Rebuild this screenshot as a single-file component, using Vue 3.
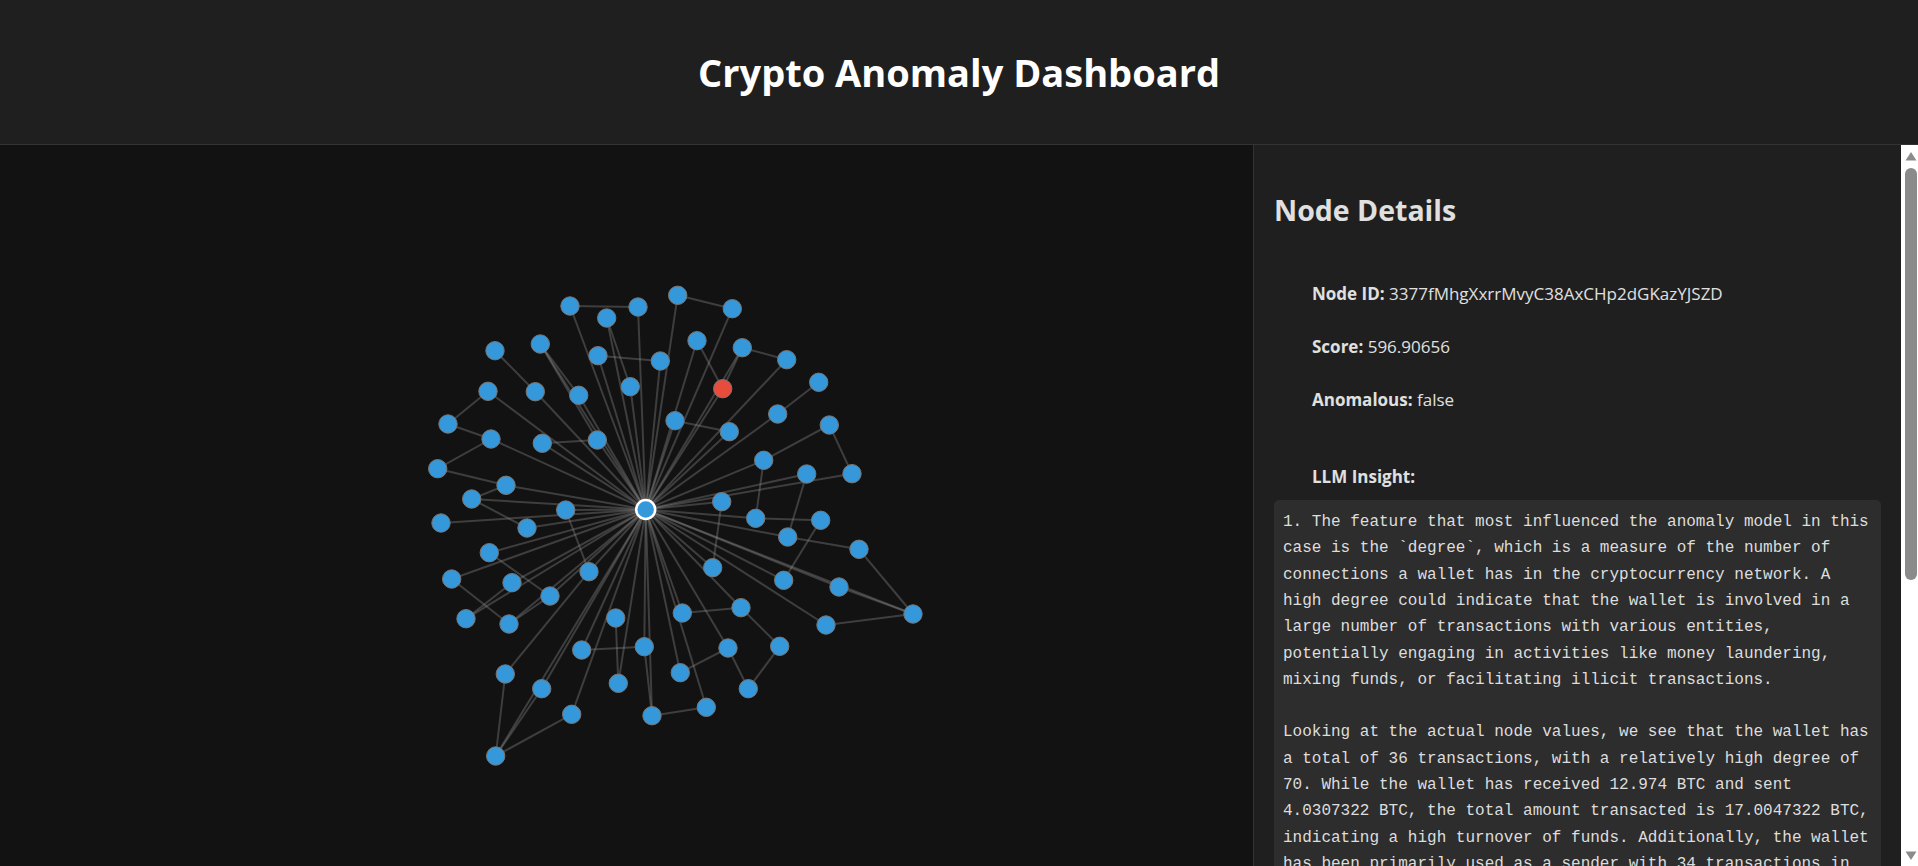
<template>
  <div class="dashboard">
    <header class="top-bar">
      <h1>Crypto Anomaly Dashboard</h1>
    </header>
    <div class="content">
      <main class="graph-area">
        <svg class="graph" viewBox="0 145 1253 721">
          <line
            v-for="(edge, i) in edges"
            :key="i"
            class="edge"
            :x1="nodes[edge[0]][0]"
            :y1="nodes[edge[0]][1]"
            :x2="nodes[edge[1]][0]"
            :y2="nodes[edge[1]][1]"
          />
          <circle
            v-for="(node, i) in nodes"
            :key="'n' + i"
            class="node"
            :class="{ anomalous: i === redNode }"
            :cx="node[0]"
            :cy="node[1]"
            r="9.2"
          />
          <circle class="node selected" :cx="hub[0]" :cy="hub[1]" r="9.5" />
        </svg>
      </main>
      <aside class="details">
        <h2>Node Details</h2>
        <div class="fields">
          <p><strong>Node ID:</strong> 3377fMhgXxrrMvyC38AxCHp2dGKazYJSZD</p>
          <p><strong>Score:</strong> 596.90656</p>
          <p><strong>Anomalous:</strong> false</p>
          <p class="insight-label"><strong>LLM Insight:</strong></p>
        </div>
        <pre class="insight">{{ insight }}</pre>
      </aside>
      <div class="scrollbar">
        <svg class="arrow up" width="12" height="10" viewBox="0 0 12 10"><path d="M6 1 L11.5 9.5 H0.5 Z" /></svg>
        <div class="thumb"></div>
        <svg class="arrow down" width="12" height="10" viewBox="0 0 12 10"><path d="M0.5 0.5 H11.5 L6 9 Z" /></svg>
      </div>
    </div>
  </div>
</template>

<script setup>
const hub = [645.7, 509.5]
const redNode = 16

const nodes = [
  [570, 306], [606.7, 318], [638, 307], [677.7, 295.3], [732.3, 308.7],
  [697, 340.7], [598, 355.7], [660.3, 361], [540.3, 344], [495, 350.7],
  [630.3, 386.7], [742.3, 347.7], [786.7, 359.7], [488, 391.3], [535.3, 391.7],
  [578.7, 395.3], [722.7, 388.7], [818.7, 382.3], [675, 420.7], [729.3, 431.7],
  [777.7, 414], [829.3, 425], [448, 424], [491, 439], [542.3, 443.3],
  [597.3, 440], [763.7, 460.3], [806.7, 474], [852, 473.7], [437.7, 468.7],
  [506, 485.3], [471.7, 499], [565.7, 510], [721.7, 501.7], [755.7, 518.3],
  [820.7, 520.3], [441, 523], [527, 528], [787.7, 537], [859, 549.3],
  [489.3, 552.7], [712.7, 567.7], [589, 571.7], [451.7, 579], [512, 582.7],
  [783.7, 580.3], [839, 587], [550, 596], [741, 607.7], [913, 614],
  [682.3, 613], [466, 618.7], [509, 624], [615.7, 618], [826, 625],
  [581.7, 650], [644.3, 646.7], [779.7, 646.3], [728, 648], [680.3, 672.7],
  [505.3, 674], [618.3, 683.3], [541.7, 688.7], [748.3, 688.7], [706.3, 707.3],
  [571.7, 714.3], [652, 715.7], [495.7, 756],
  hub,
]

const hubIndex = nodes.length - 1
const notOnHub = [9, 17, 21, 22, 29, 35, 39, 53, 57, 60, 63]

const links = [
  [0, 2], [3, 4], [5, 16], [6, 7], [8, 15], [8, 25], [9, 14], [13, 22], [22, 23],
  [29, 23], [29, 30], [24, 25], [31, 30], [31, 37], [32, 42], [1, 10], [18, 19],
  [16, 11], [11, 12], [17, 20], [21, 26], [21, 28], [27, 38], [26, 34], [33, 41],
  [34, 35], [38, 39], [35, 45], [39, 49], [46, 49], [54, 49], [48, 57], [57, 63],
  [63, 58], [50, 48], [59, 58], [40, 47], [43, 52], [51, 44], [52, 47], [60, 42],
  [60, 67], [67, 62], [67, 65], [55, 56], [56, 66], [66, 64], [53, 61],
]

const edges = [
  ...nodes.slice(0, hubIndex).map((_, i) => i).filter((i) => !notOnHub.includes(i)).map((i) => [i, hubIndex]),
  ...links,
]

const insight = `1. The feature that most influenced the anomaly model in this case is the \`degree\`, which is a measure of the number of connections a wallet has in the cryptocurrency network. A high degree could indicate that the wallet is involved in a large number of transactions with various entities, potentially engaging in activities like money laundering, mixing funds, or facilitating illicit transactions.

Looking at the actual node values, we see that the wallet has a total of 36 transactions, with a relatively high degree of 70. While the wallet has received 12.974 BTC and sent 4.0307322 BTC, the total amount transacted is 17.0047322 BTC, indicating a high turnover of funds. Additionally, the wallet has been primarily used as a sender with 34 transactions in`
</script>

<style>
html,
body {
  margin: 0;
  height: 100%;
  overflow: hidden;
  background: #121212;
}
</style>

<style scoped>
.dashboard {
  height: 866px;
  display: flex;
  flex-direction: column;
  background: #121212;
  color: #e0e0e0;
  font-family: "Open Sans", "Noto Sans", sans-serif;
}

.top-bar {
  height: 144px;
  flex: none;
  display: flex;
  align-items: center;
  justify-content: center;
  background: #1f1f1f;
  border-bottom: 1px solid #333;
}

.top-bar h1 {
  margin: 0;
  font-size: 38px;
  font-weight: 700;
  color: #fff;
}

.content {
  flex: 1;
  min-height: 0;
  display: flex;
}

.graph-area {
  width: 1253px;
  flex: none;
}

.graph {
  display: block;
  width: 1253px;
  height: 721px;
}

.edge {
  stroke: #999;
  stroke-opacity: 0.33;
  stroke-width: 2;
}

.node {
  fill: #3498db;
  stroke: #777;
  stroke-width: 1;
}

.node.anomalous {
  fill: #e74c3c;
}

.node.selected {
  stroke: #fff;
  stroke-width: 2.5;
}

.details {
  flex: 1;
  min-width: 0;
  box-sizing: border-box;
  padding: 0 20px;
  background: #1f1f1f;
  border-left: 1px solid #333;
  overflow: hidden;
}

.scrollbar {
  width: 17px;
  flex: none;
  box-sizing: border-box;
  padding: 6px 1px 5px 4px;
  display: flex;
  flex-direction: column;
  background: #fff;
}

.arrow {
  display: block;
  flex: none;
  fill: #8b8b8b;
}

.thumb {
  height: 412px;
  margin-top: 7px;
  background: #8b8b8b;
  border-radius: 6px;
}

.arrow.down {
  margin-top: auto;
}

.details h2 {
  margin: 46px 0 0;
  font-size: 28.5px;
  line-height: 38px;
  font-weight: 700;
}

.fields {
  padding-left: 38px;
  margin-top: 55px;
  font-size: 17px;
}

.fields p {
  margin: 0 0 32.3px;
  line-height: 20.5px;
}

.fields .insight-label {
  margin: 57px 0 12px;
}

.insight {
  margin: 0;
  padding: 9.5px 9px 10px;
  background: #2d2d2d;
  border-radius: 5px;
  color: #ddd;
  font-family: "Liberation Mono", monospace;
  font-size: 16px;
  line-height: 26.3px;
  white-space: pre-wrap;
}
</style>
